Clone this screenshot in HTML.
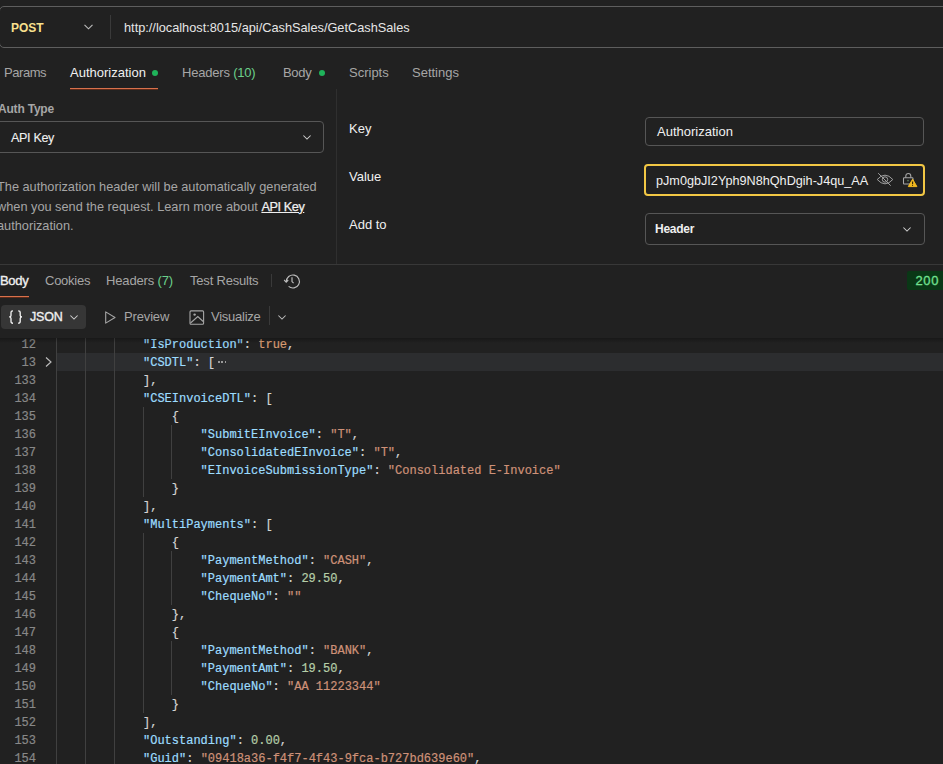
<!DOCTYPE html>
<html><head><meta charset="utf-8">
<style>
*{margin:0;padding:0;box-sizing:border-box}
html,body{width:943px;height:764px;overflow:hidden;background:#212121}
body{position:relative;font-family:"Liberation Sans",sans-serif;color:#e6e6e6;font-size:13px}
.a{position:absolute;white-space:nowrap}
svg{position:absolute;overflow:visible}
.urlbox{position:absolute;left:-1px;top:6px;width:960px;height:42px;border:1px solid #5e5e5e;border-radius:5px}
.post{left:11px;top:19px;font-size:12px;font-weight:bold;color:#f8e08e;line-height:18px}
.vdiv{position:absolute;background:#3a3a3a;width:1px}
.hline{position:absolute;background:#363636;height:1px}
.url{left:124px;top:18.6px;font-size:12.75px;color:#e6e6e6;line-height:18px}
.tab{top:64px;font-size:13px;color:#a6a6a6;line-height:18px}
.tab.on{color:#f0f0f0}
.green{color:#6bd08b}
.dot{position:absolute;width:6px;height:6px;border-radius:50%;background:#1fb35a}
.lbl{font-size:13px;color:#f0f0f0;line-height:18px}
.input{position:absolute;left:645px;width:280px;border:1px solid #565656;border-radius:4px}
.desc{left:-3px;top:177px;font-size:12.76px;color:#a6a6a6;line-height:19.65px;white-space:normal;width:340px}
.code{position:absolute;left:0;top:338px;width:943px;height:426px;overflow:hidden}
.row{position:absolute;left:0;height:18px;width:943px;font-family:"Liberation Mono",monospace;font-size:12px;line-height:18px;white-space:pre;-webkit-text-stroke:0.2px currentColor}
.ln{position:absolute;top:0.5px;right:907px;color:#888888;text-align:right}
.txt{position:absolute;top:0.5px;left:56.6px;color:#d4d4d4}
.k{color:#9cdcfe}.s{color:#ce9178}.n{color:#b5cea8}.b{color:#d79b72}
.guide{position:absolute;width:1px;background:#404040}
</style></head>
<body>
<!-- URL bar -->
<div class="urlbox"></div>
<div class="a post">POST</div>
<svg style="left:84px;top:24px" width="9" height="6" viewBox="0 0 9 6"><path d="M0.5 0.8 L4.5 4.8 L8.5 0.8" fill="none" stroke="#bdbdbd" stroke-width="1.1"/></svg>
<div class="vdiv" style="left:110px;top:15px;height:24px"></div>
<div class="a url">http://localhost:8015/api/CashSales/GetCashSales</div>

<!-- request tabs -->
<div class="a tab" style="left:4px;letter-spacing:-0.45px">Params</div>
<div class="a tab on" style="left:70px">Authorization</div>
<div class="dot" style="left:152px;top:70px"></div>
<div style="position:absolute;left:70px;top:88px;width:88px;height:1px;background:#d8714c"></div>
<div style="position:absolute;left:70px;top:89px;width:88px;height:1px;background:#5e2a18"></div>
<div class="a tab" style="left:182px;letter-spacing:-0.2px">Headers <span class="green">(10)</span></div>
<div class="a tab" style="left:283px;letter-spacing:-0.3px">Body</div>
<div class="dot" style="left:319px;top:70px"></div>
<div class="a tab" style="left:349px">Scripts</div>
<div class="a tab" style="left:412px">Settings</div>

<!-- vertical divider auth -->
<div class="vdiv" style="left:336px;top:89px;height:175px;background:#2f2f2f"></div>

<!-- left auth panel -->
<div class="a" style="left:-2px;top:100px;font-size:12px;font-weight:bold;color:#a6a6a6;line-height:18px;letter-spacing:-0.2px">Auth Type</div>
<div style="position:absolute;left:-6px;top:121px;width:330px;height:32px;border:1px solid #565656;border-radius:4px"></div>
<div class="a lbl" style="left:11px;top:128.5px;font-size:12.6px;letter-spacing:-0.35px;-webkit-text-stroke:0.1px #f0f0f0">API Key</div>
<svg style="left:303px;top:134.5px" width="8" height="5" viewBox="0 0 8 5"><path d="M0.4 0.5 L4 4.1 L7.6 0.5" fill="none" stroke="#cfcfcf" stroke-width="1.05"/></svg>
<div class="a desc">The authorization header will be automatically generated when you send the request. Learn more about <span style="color:#f0f0f0;text-decoration:underline;letter-spacing:-0.45px;-webkit-text-stroke:0.25px #f0f0f0">API Key</span> authorization.</div>

<!-- right auth panel -->
<div class="a lbl" style="left:349px;top:120px">Key</div>
<div class="a lbl" style="left:349px;top:168px">Value</div>
<div class="a lbl" style="left:349px;top:216px">Add to</div>
<div class="input" style="top:117px;height:29px;width:279px"></div>
<div class="a lbl" style="left:657px;top:123px">Authorization</div>
<div class="input" style="left:644px;width:281px;top:164px;height:32px;border:2px solid #f2c744"></div>
<div class="a lbl" style="left:656px;top:172px;font-size:12.67px">pJm0gbJI2Yph9N8hQhDgih-J4qu_AA</div>
<!-- eye-off icon -->
<svg style="left:876px;top:172px" width="18" height="15" viewBox="0 0 18 15">
 <path d="M1.2 7.5 Q9 -1.2 16.8 7.5 Q9 16.2 1.2 7.5 Z" fill="none" stroke="#a0a0a0" stroke-width="1"/>
 <circle cx="9" cy="7.5" r="2.7" fill="none" stroke="#a0a0a0" stroke-width="1"/>
 <path d="M2.2 1.2 L14.7 13.7" stroke="#a0a0a0" stroke-width="1"/>
</svg>
<!-- lock + warning -->
<svg style="left:902px;top:172px" width="17" height="16" viewBox="0 0 17 16">
 <rect x="1.5" y="5.8" width="9.5" height="6.2" rx="0.8" fill="none" stroke="#a8a8a8" stroke-width="1.05"/>
 <path d="M3.8 5.8 V4 A2.5 2.5 0 0 1 8.8 4 V5.8" fill="none" stroke="#a8a8a8" stroke-width="1.05"/>
 <circle cx="6" cy="8.6" r="0.9" fill="#5a7a5a"/>
 <path d="M10.6 7.2 L14.9 14.6 L6.3 14.6 Z" fill="#f2b91f" stroke="#f2b91f" stroke-width="1" stroke-linejoin="round"/>
 <path d="M10.6 9.6 V12.2" stroke="#2a2208" stroke-width="1.1"/>
 <circle cx="10.6" cy="13.5" r="0.55" fill="#2a2208"/>
</svg>
<div class="input" style="top:213px;height:32px"></div>
<div class="a lbl" style="left:655px;top:220px;font-weight:bold;font-size:12px;letter-spacing:-0.25px">Header</div>
<svg style="left:903px;top:226.5px" width="8" height="5" viewBox="0 0 8 5"><path d="M0.4 0.5 L4 4.1 L7.6 0.5" fill="none" stroke="#cfcfcf" stroke-width="1.05"/></svg>

<!-- response divider -->
<div class="hline" style="left:0;top:264px;width:943px;background:#383838"></div>

<!-- response tabs -->
<div class="a tab on" style="left:0;top:272px;letter-spacing:-0.3px;-webkit-text-stroke:0.35px #f0f0f0">Body</div>
<div style="position:absolute;left:0;top:296px;width:29px;height:1px;background:#d8714c"></div>
<div style="position:absolute;left:0;top:297px;width:29px;height:1px;background:#5e2a18"></div>
<div class="a tab" style="left:45px;top:272px;letter-spacing:-0.25px">Cookies</div>
<div class="a tab" style="left:106px;top:272px;letter-spacing:-0.15px">Headers <span class="green">(7)</span></div>
<div class="a tab" style="left:190px;top:272px;letter-spacing:-0.2px">Test Results</div>
<div class="vdiv" style="left:271px;top:274px;height:13px;background:#3a3a3a"></div>
<!-- history icon -->
<svg style="left:283px;top:273px" width="17" height="16" viewBox="0 0 17 16">
 <path d="M3.4 8.8 A6.5 6.5 0 1 1 5.6 13.4" fill="none" stroke="#bdbdbd" stroke-width="1.15"/>
 <path d="M1.2 7 L3.2 9.2 L5.2 7" fill="none" stroke="#bdbdbd" stroke-width="1.15"/>
 <path d="M9 4.3 V8.6 L10.6 10.2" fill="none" stroke="#bdbdbd" stroke-width="1.15"/>
</svg>
<div style="position:absolute;left:907px;top:271px;width:40px;height:19px;background:#0a3716;border-radius:2px"></div>
<div class="a" style="left:915.5px;top:272px;font-size:13px;color:#72e090;line-height:18px;letter-spacing:0.6px;-webkit-text-stroke:0.3px #72e090">200</div>

<!-- toolbar -->
<div style="position:absolute;left:1px;top:305px;width:85px;height:24px;background:#363636;border-radius:4px"></div>
<!-- braces icon -->
<svg style="left:8px;top:310px" width="16" height="15" viewBox="0 0 16 15">
 <path d="M5 0.8 Q3 0.8 3 2.6 V5.4 Q3 6.9 1.2 6.9 Q3 6.9 3 8.4 V11.4 Q3 13.2 5 13.2" fill="none" stroke="#f0f0f0" stroke-width="1.35"/>
 <path d="M10.2 0.8 Q12.2 0.8 12.2 2.6 V5.4 Q12.2 6.9 14 6.9 Q12.2 6.9 12.2 8.4 V11.4 Q12.2 13.2 10.2 13.2" fill="none" stroke="#f0f0f0" stroke-width="1.35"/>
</svg>
<div class="a lbl" style="left:30px;top:308px;font-size:12.5px;letter-spacing:-0.2px;-webkit-text-stroke:0.35px #f0f0f0">JSON</div>
<svg style="left:70px;top:315px" width="8" height="5" viewBox="0 0 8 5"><path d="M0.4 0.5 L4 4.1 L7.6 0.5" fill="none" stroke="#cfcfcf" stroke-width="1.05"/></svg>
<!-- preview triangle -->
<svg style="left:105px;top:311px" width="11" height="13" viewBox="0 0 11 13">
 <path d="M0.7 0.9 L10 6.5 L0.7 12.1 Z" fill="none" stroke="#a6a6a6" stroke-width="1.1" stroke-linejoin="round"/>
</svg>
<div class="a tab" style="left:124px;top:308px;letter-spacing:-0.15px">Preview</div>
<!-- image icon -->
<svg style="left:189px;top:309.5px" width="16" height="15" viewBox="0 0 16 15">
 <rect x="1" y="0.9" width="13.6" height="13.4" rx="1" fill="none" stroke="#a6a6a6" stroke-width="1.1"/>
 <circle cx="5.6" cy="4.6" r="1.2" fill="#a6a6a6"/>
 <path d="M1.5 13 L8.8 6.6 L14.2 11.5" fill="none" stroke="#a6a6a6" stroke-width="1.1"/>
</svg>
<div class="a tab" style="left:211px;top:308px;letter-spacing:-0.25px">Visualize</div>
<div class="vdiv" style="left:269px;top:306px;height:19px;background:#3a3a3a"></div>
<svg style="left:278px;top:315px" width="8" height="5" viewBox="0 0 8 5"><path d="M0.4 0.5 L4 4.1 L7.6 0.5" fill="none" stroke="#bdbdbd" stroke-width="1.05"/></svg>

<!-- shadow above code -->


<div class="code" id="code">
<div class="guide" style="left:56.1px;top:-3px;height:18px"></div>
<div class="guide" style="left:84.9px;top:-3px;height:18px"></div>
<div class="guide" style="left:113.7px;top:-3px;height:18px"></div>
<div class="row" style="top:-3px"><span class="ln">12</span><span class="txt" style="left:143.0px"><span class="k">"IsProduction"</span>: <span class="b">true</span>,</span></div>
<div style="position:absolute;left:56px;top:15px;width:887px;height:18px;background:#2c2d2f"></div>
<div class="guide" style="left:56.1px;top:15px;height:18px"></div>
<div class="guide" style="left:84.9px;top:15px;height:18px"></div>
<div class="guide" style="left:113.7px;top:15px;height:18px"></div>
<div class="row" style="top:15px"><span class="ln">13</span><span class="txt" style="left:143.0px"><span class="k">"CSDTL"</span>: [</span></div>
<div style="position:absolute;left:218px;top:23px;width:1.6px;height:2px;background:#9a9a9a"></div>
<div style="position:absolute;left:221.4px;top:23px;width:1.6px;height:2px;background:#9a9a9a"></div>
<div style="position:absolute;left:224.8px;top:23px;width:1.6px;height:2px;background:#9a9a9a"></div>
<svg style="position:absolute;left:44px;top:18px" width="9" height="12" viewBox="0 0 9 12"><path d="M2 1.5 L7 6 L2 10.5" fill="none" stroke="#bdbdbd" stroke-width="1.15"/></svg>
<div class="guide" style="left:56.1px;top:33px;height:18px"></div>
<div class="guide" style="left:84.9px;top:33px;height:18px"></div>
<div class="guide" style="left:113.7px;top:33px;height:18px"></div>
<div class="row" style="top:33px"><span class="ln">133</span><span class="txt" style="left:143.0px">],</span></div>
<div class="guide" style="left:56.1px;top:51px;height:18px"></div>
<div class="guide" style="left:84.9px;top:51px;height:18px"></div>
<div class="guide" style="left:113.7px;top:51px;height:18px"></div>
<div class="row" style="top:51px"><span class="ln">134</span><span class="txt" style="left:143.0px"><span class="k">"CSEInvoiceDTL"</span>: [</span></div>
<div class="guide" style="left:56.1px;top:69px;height:18px"></div>
<div class="guide" style="left:84.9px;top:69px;height:18px"></div>
<div class="guide" style="left:113.7px;top:69px;height:18px"></div>
<div class="guide" style="left:142.5px;top:69px;height:18px"></div>
<div class="row" style="top:69px"><span class="ln">135</span><span class="txt" style="left:171.8px">{</span></div>
<div class="guide" style="left:56.1px;top:87px;height:18px"></div>
<div class="guide" style="left:84.9px;top:87px;height:18px"></div>
<div class="guide" style="left:113.7px;top:87px;height:18px"></div>
<div class="guide" style="left:142.5px;top:87px;height:18px"></div>
<div class="guide" style="left:171.3px;top:87px;height:18px"></div>
<div class="row" style="top:87px"><span class="ln">136</span><span class="txt" style="left:200.6px"><span class="k">"SubmitEInvoice"</span>: <span class="s">"T"</span>,</span></div>
<div class="guide" style="left:56.1px;top:105px;height:18px"></div>
<div class="guide" style="left:84.9px;top:105px;height:18px"></div>
<div class="guide" style="left:113.7px;top:105px;height:18px"></div>
<div class="guide" style="left:142.5px;top:105px;height:18px"></div>
<div class="guide" style="left:171.3px;top:105px;height:18px"></div>
<div class="row" style="top:105px"><span class="ln">137</span><span class="txt" style="left:200.6px"><span class="k">"ConsolidatedEInvoice"</span>: <span class="s">"T"</span>,</span></div>
<div class="guide" style="left:56.1px;top:123px;height:18px"></div>
<div class="guide" style="left:84.9px;top:123px;height:18px"></div>
<div class="guide" style="left:113.7px;top:123px;height:18px"></div>
<div class="guide" style="left:142.5px;top:123px;height:18px"></div>
<div class="guide" style="left:171.3px;top:123px;height:18px"></div>
<div class="row" style="top:123px"><span class="ln">138</span><span class="txt" style="left:200.6px"><span class="k">"EInvoiceSubmissionType"</span>: <span class="s">"Consolidated E-Invoice"</span></span></div>
<div class="guide" style="left:56.1px;top:141px;height:18px"></div>
<div class="guide" style="left:84.9px;top:141px;height:18px"></div>
<div class="guide" style="left:113.7px;top:141px;height:18px"></div>
<div class="guide" style="left:142.5px;top:141px;height:18px"></div>
<div class="row" style="top:141px"><span class="ln">139</span><span class="txt" style="left:171.8px">}</span></div>
<div class="guide" style="left:56.1px;top:159px;height:18px"></div>
<div class="guide" style="left:84.9px;top:159px;height:18px"></div>
<div class="guide" style="left:113.7px;top:159px;height:18px"></div>
<div class="row" style="top:159px"><span class="ln">140</span><span class="txt" style="left:143.0px">],</span></div>
<div class="guide" style="left:56.1px;top:177px;height:18px"></div>
<div class="guide" style="left:84.9px;top:177px;height:18px"></div>
<div class="guide" style="left:113.7px;top:177px;height:18px"></div>
<div class="row" style="top:177px"><span class="ln">141</span><span class="txt" style="left:143.0px"><span class="k">"MultiPayments"</span>: [</span></div>
<div class="guide" style="left:56.1px;top:195px;height:18px"></div>
<div class="guide" style="left:84.9px;top:195px;height:18px"></div>
<div class="guide" style="left:113.7px;top:195px;height:18px"></div>
<div class="guide" style="left:142.5px;top:195px;height:18px"></div>
<div class="row" style="top:195px"><span class="ln">142</span><span class="txt" style="left:171.8px">{</span></div>
<div class="guide" style="left:56.1px;top:213px;height:18px"></div>
<div class="guide" style="left:84.9px;top:213px;height:18px"></div>
<div class="guide" style="left:113.7px;top:213px;height:18px"></div>
<div class="guide" style="left:142.5px;top:213px;height:18px"></div>
<div class="guide" style="left:171.3px;top:213px;height:18px"></div>
<div class="row" style="top:213px"><span class="ln">143</span><span class="txt" style="left:200.6px"><span class="k">"PaymentMethod"</span>: <span class="s">"CASH"</span>,</span></div>
<div class="guide" style="left:56.1px;top:231px;height:18px"></div>
<div class="guide" style="left:84.9px;top:231px;height:18px"></div>
<div class="guide" style="left:113.7px;top:231px;height:18px"></div>
<div class="guide" style="left:142.5px;top:231px;height:18px"></div>
<div class="guide" style="left:171.3px;top:231px;height:18px"></div>
<div class="row" style="top:231px"><span class="ln">144</span><span class="txt" style="left:200.6px"><span class="k">"PaymentAmt"</span>: <span class="n">29.50</span>,</span></div>
<div class="guide" style="left:56.1px;top:249px;height:18px"></div>
<div class="guide" style="left:84.9px;top:249px;height:18px"></div>
<div class="guide" style="left:113.7px;top:249px;height:18px"></div>
<div class="guide" style="left:142.5px;top:249px;height:18px"></div>
<div class="guide" style="left:171.3px;top:249px;height:18px"></div>
<div class="row" style="top:249px"><span class="ln">145</span><span class="txt" style="left:200.6px"><span class="k">"ChequeNo"</span>: <span class="s">""</span></span></div>
<div class="guide" style="left:56.1px;top:267px;height:18px"></div>
<div class="guide" style="left:84.9px;top:267px;height:18px"></div>
<div class="guide" style="left:113.7px;top:267px;height:18px"></div>
<div class="guide" style="left:142.5px;top:267px;height:18px"></div>
<div class="row" style="top:267px"><span class="ln">146</span><span class="txt" style="left:171.8px">},</span></div>
<div class="guide" style="left:56.1px;top:285px;height:18px"></div>
<div class="guide" style="left:84.9px;top:285px;height:18px"></div>
<div class="guide" style="left:113.7px;top:285px;height:18px"></div>
<div class="guide" style="left:142.5px;top:285px;height:18px"></div>
<div class="row" style="top:285px"><span class="ln">147</span><span class="txt" style="left:171.8px">{</span></div>
<div class="guide" style="left:56.1px;top:303px;height:18px"></div>
<div class="guide" style="left:84.9px;top:303px;height:18px"></div>
<div class="guide" style="left:113.7px;top:303px;height:18px"></div>
<div class="guide" style="left:142.5px;top:303px;height:18px"></div>
<div class="guide" style="left:171.3px;top:303px;height:18px"></div>
<div class="row" style="top:303px"><span class="ln">148</span><span class="txt" style="left:200.6px"><span class="k">"PaymentMethod"</span>: <span class="s">"BANK"</span>,</span></div>
<div class="guide" style="left:56.1px;top:321px;height:18px"></div>
<div class="guide" style="left:84.9px;top:321px;height:18px"></div>
<div class="guide" style="left:113.7px;top:321px;height:18px"></div>
<div class="guide" style="left:142.5px;top:321px;height:18px"></div>
<div class="guide" style="left:171.3px;top:321px;height:18px"></div>
<div class="row" style="top:321px"><span class="ln">149</span><span class="txt" style="left:200.6px"><span class="k">"PaymentAmt"</span>: <span class="n">19.50</span>,</span></div>
<div class="guide" style="left:56.1px;top:339px;height:18px"></div>
<div class="guide" style="left:84.9px;top:339px;height:18px"></div>
<div class="guide" style="left:113.7px;top:339px;height:18px"></div>
<div class="guide" style="left:142.5px;top:339px;height:18px"></div>
<div class="guide" style="left:171.3px;top:339px;height:18px"></div>
<div class="row" style="top:339px"><span class="ln">150</span><span class="txt" style="left:200.6px"><span class="k">"ChequeNo"</span>: <span class="s">"AA 11223344"</span></span></div>
<div class="guide" style="left:56.1px;top:357px;height:18px"></div>
<div class="guide" style="left:84.9px;top:357px;height:18px"></div>
<div class="guide" style="left:113.7px;top:357px;height:18px"></div>
<div class="guide" style="left:142.5px;top:357px;height:18px"></div>
<div class="row" style="top:357px"><span class="ln">151</span><span class="txt" style="left:171.8px">}</span></div>
<div class="guide" style="left:56.1px;top:375px;height:18px"></div>
<div class="guide" style="left:84.9px;top:375px;height:18px"></div>
<div class="guide" style="left:113.7px;top:375px;height:18px"></div>
<div class="row" style="top:375px"><span class="ln">152</span><span class="txt" style="left:143.0px">],</span></div>
<div class="guide" style="left:56.1px;top:393px;height:18px"></div>
<div class="guide" style="left:84.9px;top:393px;height:18px"></div>
<div class="guide" style="left:113.7px;top:393px;height:18px"></div>
<div class="row" style="top:393px"><span class="ln">153</span><span class="txt" style="left:143.0px"><span class="k">"Outstanding"</span>: <span class="n">0.00</span>,</span></div>
<div class="guide" style="left:56.1px;top:411px;height:18px"></div>
<div class="guide" style="left:84.9px;top:411px;height:18px"></div>
<div class="guide" style="left:113.7px;top:411px;height:18px"></div>
<div class="row" style="top:411px"><span class="ln">154</span><span class="txt" style="left:143.0px"><span class="k">"Guid"</span>: <span class="s">"09418a36-f4f7-4f43-9fca-b727bd639e60"</span>,</span></div>
</div>
<div style="position:absolute;left:0;top:338px;width:943px;height:5px;background:linear-gradient(rgba(0,0,0,0.28),rgba(0,0,0,0))"></div>
</body></html>
